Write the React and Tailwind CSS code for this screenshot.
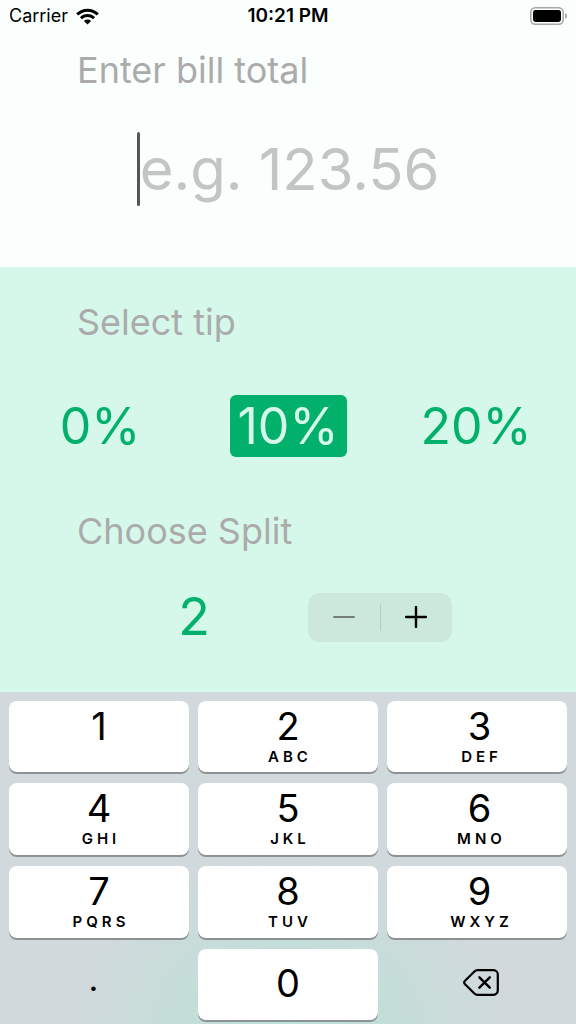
import { useState } from 'react';

const TIPS = [0, 10, 20];

const KEYS = [
  ['1', ''],
  ['2', 'ABC'],
  ['3', 'DEF'],
  ['4', 'GHI'],
  ['5', 'JKL'],
  ['6', 'MNO'],
  ['7', 'PQRS'],
  ['8', 'TUV'],
  ['9', 'WXYZ'],
];

function WifiIcon() {
  return (
    <svg viewBox="0 0 23 17" className="h-[17px] w-[23px]" aria-hidden="true">
      <g fill="none" stroke="#000" strokeWidth="3">
        <path d="M1.200 6.400a14.600 14.600 0 0 1 20.600 0" />
        <path d="M5 10.200a9.200 9.200 0 0 1 13 0" />
      </g>
      <path d="M11.500 16.600l-3.600-3.600a5.100 5.100 0 0 1 7.200 0z" fill="#000" />
    </svg>
  );
}

function BatteryIcon() {
  return (
    <svg viewBox="0 0 37 18" className="h-[18px] w-[37px]" aria-hidden="true">
      <rect x="0.8" y="0.8" width="32.4" height="16.4" rx="4.400" fill="none" stroke="#a3a6a5" strokeWidth="1.500" />
      <rect x="3" y="3" width="28" height="12" rx="2.400" fill="#000" />
      <path d="M35 6.200c1.300.5 2 1.500 2 2.800s-.7 2.300-2 2.800z" fill="#a3a6a5" />
    </svg>
  );
}

function StatusBar() {
  return (
    <div className="grid h-8 grid-cols-3 items-center px-[9px] text-black">
      <div className="flex items-center gap-2 text-lg">
        <span>Carrier</span>
        <WifiIcon />
      </div>
      <div className="text-center text-[19px] font-semibold">10:21 PM</div>
      <div className="flex justify-end">
        <BatteryIcon />
      </div>
    </div>
  );
}

function Key({ digit, letters, onPress }) {
  return (
    <button
      type="button"
      onClick={() => onPress(digit)}
      className="flex flex-col items-center rounded-lg bg-white pt-[5px] text-black shadow-[0_2px_0_#8c9293] nth-[3n]:pl-[5px]"
    >
      <span className="text-[38px] leading-[41px]">{digit}</span>
      <span className="pl-[4px] text-[15px] leading-[20px] font-semibold tracking-[4px]">{letters}</span>
    </button>
  );
}

export default function App() {
  const [bill, setBill] = useState('');
  const [tip, setTip] = useState(10);
  const [split, setSplit] = useState(2);
  const press = (c) => setBill((b) => b + c);

  return (
    <div className="flex min-h-screen flex-col bg-[#d6f8ea] font-['Inter',sans-serif]">
      <header className="bg-[#fafffe] pb-[61px]">
        <StatusBar />
        <label htmlFor="bill" className="block px-[77px] pt-[15px] text-[36px] leading-[46px] text-[#ababab]">
          Enter bill total
        </label>
        <div className="mt-[39px] flex items-center justify-center">
          <span className="h-[74px] w-[3px] rounded-full bg-[#555]" />
          <input
            id="bill"
            inputMode="decimal"
            value={bill}
            onChange={(e) => setBill(e.target.value)}
            placeholder="e.g. 123.56"
            className="field-sizing-content h-[74px] bg-transparent text-[58px] leading-[74px] text-[#00b06b] outline-none placeholder:text-[#c1c5c4]"
          />
        </div>
      </header>

      <main className="grow">
        <h2 className="px-[77px] pt-[32px] text-[36px] leading-[46px] text-[#ababab]">Select tip</h2>
        <div className="mt-[50px] grid grid-cols-3 justify-items-center px-[6px]">
          {TIPS.map((t) => (
            <button
              key={t}
              type="button"
              aria-pressed={tip === t}
              onClick={() => setTip(t)}
              className={
                tip === t
                  ? 'h-[62px] rounded-md bg-[#00b06b] px-[8px] text-[50px] leading-[62px] text-[#d6f8ea]'
                  : 'h-[62px] rounded-md px-[8px] text-[50px] leading-[62px] text-[#00b06b]'
              }
            >
              {t}%
            </button>
          ))}
        </div>
        <h2 className="mt-[51px] px-[77px] text-[36px] leading-[46px] text-[#ababab]">Choose Split</h2>
        <div className="mt-[36px] flex items-center justify-center gap-[44px]">
          <output className="w-[140px] text-center text-[52px] leading-[54px] text-[#00b06b]">{split}</output>
          <div className="flex h-[49px] w-[144px] items-center rounded-xl bg-[#cce8dc]">
            <button
              type="button"
              aria-label="Decrease split"
              onClick={() => setSplit((s) => Math.max(2, s - 1))}
              className="flex h-full flex-1 items-center justify-center"
            >
              <svg viewBox="0 0 22 22" className="size-[22px]" aria-hidden="true">
                <path d="M1 11h20" stroke="#747e79" strokeWidth="2" strokeLinecap="round" />
              </svg>
            </button>
            <span className="h-[27px] w-px bg-[#b4cdc3]" />
            <button
              type="button"
              aria-label="Increase split"
              onClick={() => setSplit((s) => s + 1)}
              className="flex h-full flex-1 items-center justify-center"
            >
              <svg viewBox="0 0 22 22" className="size-[22px]" aria-hidden="true">
                <path d="M1 11h20M11 1v20" stroke="#000" strokeWidth="2.400" strokeLinecap="round" />
              </svg>
            </button>
          </div>
        </div>
      </main>

      <section
        aria-label="Keypad"
        className="grid grid-cols-3 grid-rows-[71px_72px_72px_71px] gap-x-[9px] gap-y-[11px] bg-[#d1d9dc] bg-[radial-gradient(ellipse_220px_170px_at_50%_100%,#bbe3d7_0%,#c0dfd7_35%,#c9dcda_65%,#d1d9dc_100%)] px-[9px] pt-[9px] pb-[4px]"
      >
        {KEYS.map(([digit, letters]) => (
          <Key key={digit} digit={digit} letters={letters} onPress={press} />
        ))}
        <button
          type="button"
          aria-label="Decimal point"
          onClick={() => press('.')}
          className="pr-[11px] pb-[12px] text-[34px] leading-[40px] text-black"
        >
          .
        </button>
        <button
          type="button"
          onClick={() => press('0')}
          className="rounded-lg bg-white pb-[4px] text-[38px] leading-[40px] text-black shadow-[0_2px_0_#8c9293]"
        >
          0
        </button>
        <button
          type="button"
          aria-label="Delete"
          onClick={() => setBill((b) => b.slice(0, -1))}
          className="flex items-center justify-center pb-[4px] pl-[7px]"
        >
          <svg viewBox="0 0 36 27" className="h-[27px] w-[36px]" fill="none" stroke="#000" strokeLinecap="round" strokeLinejoin="round" aria-hidden="true">
            <path
              d="M14.500 1.200H30.500a4.300 4.300 0 0 1 4.300 4.300V21.500a4.300 4.300 0 0 1-4.300 4.300H14.500a4.500 4.500 0 0 1-3.100-1.300L1.800 15a2.100 2.100 0 0 1 0-3L11.400 2.500a4.500 4.500 0 0 1 3.100-1.300z"
              strokeWidth="2.200"
            />
            <path d="M16.400 8.300l10.400 10.400M26.800 8.300L16.400 18.700" strokeWidth="2.400" />
          </svg>
        </button>
      </section>
    </div>
  );
}
